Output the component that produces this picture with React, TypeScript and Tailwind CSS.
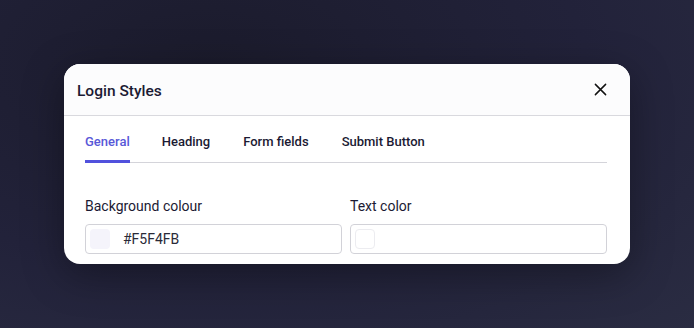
import React from "react";

export default function App() {
  const tabs = ["General", "Heading", "Form fields", "Submit Button"];
  return (
    <div
      className="w-[694px] h-[328px] flex items-start justify-center pt-[64px] bg-[radial-gradient(ellipse_at_30%_20%,#1b1b2c_0%,#22223a_55%,#2a2c42_100%)]"
      style={{ fontFamily: "Roboto, 'Liberation Sans', sans-serif" }}
    >
      <div className="w-[566px] h-[200px] bg-white rounded-[16px] overflow-hidden flex flex-col shadow-[0_10px_40px_rgba(0,0,0,0.35)]">
        <div className="h-[52px] shrink-0 bg-[#fcfcfd] border-b border-[#d9d9de] flex items-center justify-between pl-[13px] pr-[23px]">
          <div className="text-[15.5px] font-medium text-[#1b1a33] leading-[20px] pt-[2px]">Login Styles</div>
          <svg width="13" height="13" viewBox="0 0 14 14" fill="none" stroke="#111" strokeWidth="1.6" strokeLinecap="round">
            <path d="M1.5 1.5L12.5 12.5M12.5 1.5L1.5 12.5" />
          </svg>
        </div>
        <div className="pl-[21px] pr-[23px] flex flex-col">
          <div className="flex border-b border-[#d4d4da] h-[47px] items-end">
            {tabs.map((t, i) => (
              <div
                key={t}
                className={
                  "text-[13px] font-medium leading-[16px] pb-[10px] border-b-[3px] -mb-[1px] " +
                  (i === 0
                    ? "text-[#5858d8] border-[#5151dd] mr-[32px]"
                    : i === 1
                    ? "text-[#1b1a33] border-transparent mr-[33px]"
                    : "text-[#1b1a33] border-transparent mr-[33px]")
                }
              >
                {t}
              </div>
            ))}
          </div>
          <div className="grid grid-cols-2 gap-[8px] mt-[34px]">
            <div className="flex flex-col">
              <div className="text-[14px] text-[#1b1a33] leading-[18px]">Background colour</div>
              <div className="mt-[9px] h-[30px] border border-[#d2d2d8] rounded-[4px] flex items-center pl-[4px]">
                <div className="w-[20px] h-[20px] rounded-[4px] bg-[#F5F4FB]" />
                <div className="ml-[13px] text-[14px] text-[#2a2a38]">#F5F4FB</div>
              </div>
            </div>
            <div className="flex flex-col">
              <div className="text-[14px] text-[#1b1a33] leading-[18px]">Text color</div>
              <div className="mt-[9px] h-[30px] border border-[#d2d2d8] rounded-[4px] flex items-center pl-[4px]">
                <div className="w-[20px] h-[20px] rounded-[4px] bg-white border border-[#ececf0]" />
              </div>
            </div>
          </div>
        </div>
      </div>
    </div>
  );
}
